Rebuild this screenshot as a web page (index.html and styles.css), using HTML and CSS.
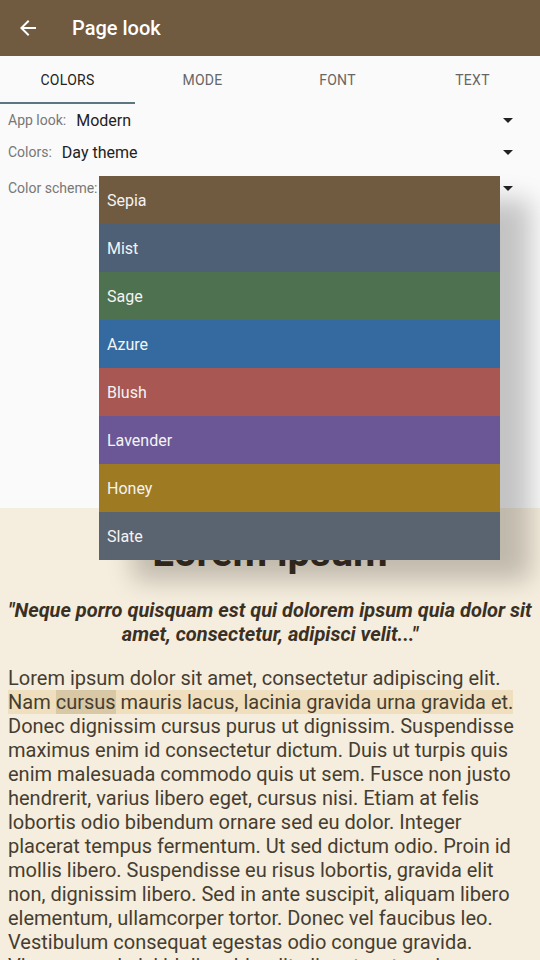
FILE: index.html
```html
<!DOCTYPE html>
<html>
<head>
<meta charset="utf-8">
<link rel="stylesheet" href="styles.css">
</head>
<body>
<div class="screen">
  <header class="appbar">
    <svg class="back" viewBox="0 0 24 24" width="24" height="24"><path d="M20 11H7.83l5.59-5.59L12 4l-8 8 8 8 1.41-1.41L7.83 13H20v-2z" fill="#fff"/></svg>
    <h1 class="title">Page look</h1>
  </header>
  <nav class="tabs">
    <div class="tab active">COLORS</div>
    <div class="tab">MODE</div>
    <div class="tab">FONT</div>
    <div class="tab">TEXT</div>
  </nav>
  <section class="settings">
    <div class="row">
      <span class="label">App look:</span><span class="value">Modern</span>
      <svg class="drop" viewBox="0 0 24 24" width="24" height="24"><path d="M7 10l5 5 5-5z" fill="#222"/></svg>
    </div>
    <div class="row">
      <span class="label">Colors:</span><span class="value">Day theme</span>
      <svg class="drop" viewBox="0 0 24 24" width="24" height="24"><path d="M7 10l5 5 5-5z" fill="#222"/></svg>
    </div>
    <div class="row row3">
      <span class="label">Color scheme:</span><span class="value"></span>
      <svg class="drop" viewBox="0 0 24 24" width="24" height="24"><path d="M7 10l5 5 5-5z" fill="#222"/></svg>
    </div>
  </section>
  <section class="preview">
    <h2 class="heading">Lorem ipsum</h2>
    <p class="quote">"Neque porro quisquam est qui dolorem ipsum quia dolor sit amet, consectetur, adipisci velit..."</p>
    <p class="body">Lorem ipsum dolor sit amet, consectetur adipiscing elit. <span class="hl">Nam <span class="word">cursus</span> mauris lacus, lacinia gravida urna gravida et.</span> Donec dignissim cursus purus ut dignissim. Suspendisse maximus enim id consectetur dictum. Duis ut turpis quis enim malesuada commodo quis ut sem. Fusce non justo hendrerit, varius libero eget, cursus nisi. Etiam at felis lobortis odio bibendum ornare sed eu dolor. Integer placerat tempus fermentum. Ut sed dictum odio. Proin id mollis libero. Suspendisse eu risus lobortis, gravida elit non, dignissim libero. Sed in ante suscipit, aliquam libero elementum, ullamcorper tortor. Donec vel faucibus leo. Vestibulum consequat egestas odio congue gravida. Vivamus sed nisi id diam blandit aliquet a at sapien.</p>
  </section>
  <ul class="menu">
    <li class="opt sepia">Sepia</li>
    <li class="opt mist">Mist</li>
    <li class="opt sage">Sage</li>
    <li class="opt azure">Azure</li>
    <li class="opt blush">Blush</li>
    <li class="opt lavender">Lavender</li>
    <li class="opt honey">Honey</li>
    <li class="opt slate">Slate</li>
  </ul>
</div>
</body>
</html>
```

FILE: styles.css
```css
* { box-sizing: border-box; }
html, body { margin: 0; padding: 0; }
body {
  width: 540px;
  height: 960px;
  overflow: hidden;
  font-family: Roboto, "Noto Sans", sans-serif;
  background: #f5eddd;
}
.screen {
  position: relative;
  width: 540px;
  height: 960px;
  overflow: hidden;
  display: flex;
  flex-direction: column;
}
.appbar {
  height: 56px;
  flex: none;
  background: #705a40;
  display: flex;
  align-items: center;
  padding-left: 16px;
}
.back { display: block; }
.title {
  margin: 0 0 0 32px;
  color: #fff;
  font-size: 20px;
  font-weight: 500;
}
.tabs {
  height: 48px;
  flex: none;
  display: grid;
  grid-template-columns: repeat(4, 135px);
  background: #fafafa;
}
.tab {
  display: flex;
  align-items: center;
  justify-content: center;
  font-size: 14px;
  font-weight: 400;
  letter-spacing: 0.3px;
  color: #666;
  border-bottom: 2px solid transparent;
  padding-top: 2px;
}
.tab.active {
  color: #222;
  border-bottom-color: #5b7782;
}
.settings {
  height: 404px;
  flex: none;
  background: #fafafa;
}
.row {
  height: 32px;
  display: flex;
  align-items: center;
  padding: 0 20px 0 8px;
}
.row3 { margin-top: 4px; }
.label {
  font-size: 14px;
  color: #777;
  margin-right: 10px;
}
.value {
  font-size: 16px;
  color: #222;
  flex: 1;
}
.drop { display: block; flex: none; }
.preview {
  flex: 1;
  background: #f5eddd;
  padding: 21px 8px 0 8px;
  color: #463d30;
}
.heading {
  margin: 0;
  font-size: 40px;
  line-height: 48px;
  font-weight: 700;
  text-align: center;
  color: #3a3024;
}
.quote {
  margin: 21px -6px 0 -6px;
  font-size: 20px;
  line-height: 24px;
  font-weight: 700;
  font-style: italic;
  text-align: center;
  color: #3a3024;
}
.body {
  margin: 20px 0 0 0;
  font-size: 20px;
  line-height: 24px;
}
.hl { background: #f0dfbe; }
.word { background: #d9c8a6; }
.menu {
  position: absolute;
  top: 176px;
  left: 99px;
  width: 401px;
  margin: 0;
  padding: 0;
  list-style: none;
  box-shadow: 32px 22px 24px -2px rgba(0, 0, 0, 0.22);
}
.opt {
  height: 48px;
  display: flex;
  align-items: center;
  padding-left: 8px;
  font-size: 16px;
  color: #f4f4f4;
}
.sepia { background: #705a40; }
.mist { background: #4d6076; }
.sage { background: #4e7150; }
.azure { background: #346aa0; }
.blush { background: #a85752; }
.lavender { background: #6b5795; }
.honey { background: #9e7a22; }
.slate { background: #5a6370; }
```
